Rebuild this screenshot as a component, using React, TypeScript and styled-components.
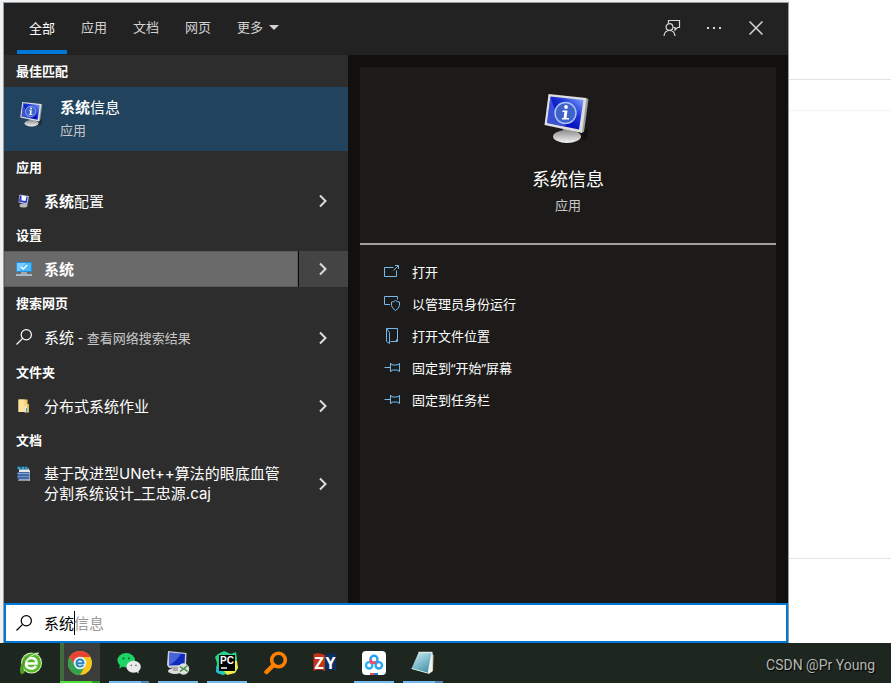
import React, { useId, useState } from "react";
import styled, { createGlobalStyle } from "styled-components";

const Global = createGlobalStyle`
  *, *::before, *::after { box-sizing: border-box; }
  html, body { margin: 0; padding: 0; }
  body {
    background: #fff;
    font-family: "Open Sans", "Noto Sans", "Noto Sans CJK SC", sans-serif;
    font-size: 13px;
    line-height: 20px;
  }
  button, input { font: inherit; color: inherit; }
  button { border: 0; padding: 0; background: none; text-align: left; }
  svg { display: block; flex: none; }
`;

/* ---------- layout ---------- */

const Screen = styled.div`
  display: flex;
  flex-direction: column;
  min-height: 100vh;
`;

const Desktop = styled.div`
  flex: 1;
  display: flex;
  padding: 2px 0 0 3px;
  background: #eef2f5;
`;

const Panel = styled.main`
  flex: 0 1 786px;
  min-width: 0;
  display: flex;
  flex-direction: column;
  border: 1px solid #9c9c9c;
  border-bottom: 0;
`;

const PageBehind = styled.div`
  flex: 1;
  display: flex;
  flex-direction: column;
  margin-top: -2px;
  background: #fff;
`;

const PageBand = styled.div<{ $size: number; $line: string }>`
  height: ${(p) => p.$size}px;
  border-bottom: 1px solid ${(p) => p.$line};
`;

const TopBar = styled.header`
  display: flex;
  justify-content: space-between;
  height: 52px;
  padding: 0 11px 0 12px;
  background: #222;
`;

const Tabs = styled.nav`
  display: flex;
`;

const Tab = styled.button<{ $active?: boolean }>`
  display: flex;
  align-items: center;
  gap: 6px;
  height: 51px;
  margin: 0 1px;
  padding: ${(p) => (p.$active ? 3 : 1)}px 12px 0;
  border-bottom: 4px solid ${(p) => (p.$active ? "#0078d7" : "transparent")};
  color: ${(p) => (p.$active ? "#fff" : "#d2d2d2")};
  white-space: nowrap;
`;

const Tools = styled.div`
  display: flex;
`;

const Tool = styled.button`
  display: grid;
  place-items: center;
  width: 42px;
  height: 50px;
  color: #d6d6d6;
`;

const Body = styled.div`
  flex: 1;
  display: grid;
  grid-template-columns: minmax(0, 344fr) minmax(0, 440fr);
`;

const Results = styled.section`
  background: #2d2d2d;
  color: #fff;
`;

const GroupTitle = styled.h2`
  margin: 0;
  padding: 6px 12px;
  font-size: 13px;
  line-height: 20px;
  font-weight: 700;
`;

const BestMatch = styled.button`
  display: flex;
  align-items: flex-start;
  gap: 15px;
  width: 100%;
  height: 64px;
  padding: 9px 15px 0;
  background: #21435e;
`;

const BestIcon = styled.span`
  padding-top: 5px;
`;

const BestText = styled.span`
  display: flex;
  flex-direction: column;
  gap: 2px;
`;

const ItemTitle = styled.span`
  font-size: 15px;
  line-height: 20px;
`;

const FileTitle = styled(ItemTitle)`
  font-family: Inter, "Noto Sans CJK SC", sans-serif;
`;

const BestTitle = styled(ItemTitle)`
  line-height: 22px;
`;

const Muted = styled.span`
  font-size: 13px;
  color: #c8c8c8;
`;

const Match = styled.b`
  font-weight: 600;
`;

const Row = styled.div<{ $selected?: boolean }>`
  display: flex;
  background: ${(p) => (p.$selected ? "#444" : "none")};
`;

const RowMain = styled.button<{ $selected?: boolean }>`
  flex: 1;
  min-width: 0;
  display: flex;
  align-items: flex-start;
  gap: 12px;
  padding: 8px 12px;
  ${(p) =>
    p.$selected &&
    `
    padding: 7px 11px;
    background: #6a6a6a;
    border: 1px solid #595959;
  `}
`;

const RowIcon = styled.span`
  display: grid;
  place-items: center;
  flex: none;
  width: 16px;
  height: 20px;
`;

const RowMore = styled.button<{ $selected?: boolean }>`
  display: grid;
  place-items: center;
  width: 50px;
  padding-right: 2px;
  color: #dcdcdc;
  border-left: 1px solid ${(p) => (p.$selected ? "#0a0a0a" : "transparent")};
`;

const Detail = styled.section`
  display: flex;
  padding: 12px 12px 0;
  background: #11100e;
`;

const Card = styled.div`
  flex: 1;
  min-width: 0;
  background: #1c1b19;
  color: #fff;
`;

const Hero = styled.div`
  display: flex;
  flex-direction: column;
  align-items: center;
  padding: 25px 0 28px;
  border-bottom: 2px solid #a2a2a1;
`;

const HeroTitle = styled.h1`
  margin: 21px 0 2px;
  font-size: 18px;
  line-height: 28px;
  font-weight: 400;
`;

const Actions = styled.ul`
  list-style: none;
  margin: 0;
  padding: 11px 0;
`;

const Action = styled.button`
  display: flex;
  align-items: center;
  gap: 12px;
  width: 100%;
  height: 32px;
  padding: 0 24px;
  color: #fff;

  svg { color: #76b9ed; }
`;

const SearchBar = styled.label`
  display: flex;
  align-items: center;
  gap: 12px;
  height: 40px;
  padding: 0 10px;
  background: #fff;
  border: 2px solid #0078d7;
  color: #000;
  font-size: 15px;
  line-height: 24px;
`;

const Field = styled.span`
  flex: 1;
  display: grid;
  align-items: center;

  > * { grid-area: 1 / 1; }
`;

const SearchInput = styled.input`
  width: 100%;
  height: 24px;
  padding: 0;
  border: 0;
  outline: 0;
  background: none;
`;

const Hint = styled.span`
  display: flex;
  color: #999;
  pointer-events: none;
`;

const Typed = styled.span`
  visibility: hidden;
`;

const Caret = styled.span`
  width: 1px;
  height: 24px;
  margin-right: -1px;
  background: #000;
`;

const Taskbar = styled.footer`
  display: flex;
  align-items: center;
  justify-content: space-between;
  height: 40px;
  padding: 0 16px 0 11px;
  background: #1e2620;
`;

const Apps = styled.div`
  display: flex;
  gap: 9px;
`;

const AppButton = styled.button<{ $state?: "open" | "many" | "active" }>`
  display: grid;
  place-items: center;
  width: 40px;
  height: 40px;
  padding-top: 2px;
  background: ${(p) =>
    p.$state === "active"
      ? "linear-gradient(90deg, #3f6e3a 4px, #3a3d3a 4px)"
      : "none"};
  border-bottom: 2px solid transparent;
  border-image: ${(p) =>
    p.$state === "active"
      ? "linear-gradient(90deg, #4fe03a 31px, #2f9c2c 31px) 2"
      : p.$state === "many"
      ? "linear-gradient(90deg, #76b9ed 31px, #5288b4 31px) 2"
      : p.$state === "open"
      ? "linear-gradient(#76b9ed, #76b9ed) 2"
      : "none"};
`;

const Watermark = styled.span`
  font-family: Roboto, "Liberation Sans", sans-serif;
  font-size: 14px;
  color: #b4b7b4;
  text-shadow: 1px 1px 1px #000;
  padding-top: 4px;
`;

/* ---------- icons ---------- */

const Monitor = ({ size }: { size: number }) => {
  const id = useId();
  return (
    <svg width={size} height={size} viewBox="0 0 50 52" aria-hidden="true">
      <defs>
        <linearGradient id={id + "s"} x1="0" y1="1" x2="1" y2="0">
          <stop offset="0" stopColor="#1420b4" />
          <stop offset=".4" stopColor="#0510c0" />
          <stop offset=".65" stopColor="#2038d8" />
          <stop offset="1" stopColor="#8eb4ff" />
        </linearGradient>
        <linearGradient id={id + "b"} x1="0" y1="0" x2="0" y2="1">
          <stop offset="0" stopColor="#8d8d8d" />
          <stop offset="1" stopColor="#f4f4f4" />
        </linearGradient>
      </defs>
      <path d="M28 40 45 37 44 47 34 49Z" fill="#000" opacity=".35" />
      <path d="M20 35 31 37 30 43H20Z" fill="#8c8c8c" />
      <ellipse cx="24" cy="44.500" rx="14" ry="6.500" fill={`url(#${id}b)`} />
      <path d="M42 6 45.500 7 41 40 38 41Z" fill="#9a9a9a" />
      <path d="M5.500 2 43.500 6 39 41 1.500 33Z" fill="#dedede" />
      <path d="M7.500 4.500 40.500 8 36 37.500 4 31Z" fill={`url(#${id}s)`} />
      <path d="M7.500 4.500Q11 20 23 34.500L4 31Z" fill="#7b97f4" opacity=".45" />
      <circle cx="22.500" cy="21" r="10.500" fill="#3f63c8" stroke="#a9c2f4" strokeWidth="1.500" />
      <circle cx="23" cy="15" r="1.900" fill="#fff" />
      <path d="M19.500 18.500H24.500L23.500 26H26V27.500H19V26H20.700L21.300 20H19.500Z" fill="#fff" />
    </svg>
  );
};

const ConfigIcon = () => (
  <svg width="16" height="16" viewBox="0 0 16 16" aria-hidden="true">
    <ellipse cx="7.500" cy="12.500" rx="4" ry="2" fill="#b9b9b9" />
    <path d="M3.500 1.500 13 3 11.500 11.500 2.500 9.500Z" fill="#b9bed8" />
    <path d="M4 2.500 11.500 4 10.500 10 3.500 8.500Z" fill="#1c2fd0" />
    <path d="M5.500 2.500 10.500 3.500 9.500 8 5.500 7.500Z" fill="#fff" />
    <path d="M2 5.500 5 6 5.500 9 3 9Z" fill="#4656c0" />
  </svg>
);

const SettingsPc = () => (
  <svg width="16" height="16" viewBox="0 0 16 16" aria-hidden="true">
    <rect y="1" width="16" height="10" fill="#2b8fd8" />
    <rect x="1" y="2" width="14" height="8" fill="#4ab8f8" />
    <path d="M1 2H10L3 10H1Z" fill="#7acbfa" />
    <path d="M5.200 6 7.300 8 11.200 4" fill="none" stroke="#fff" strokeWidth="1.500" />
    <path d="M5 12H11" stroke="#dfe8ee" />
    <rect y="13" width="16" height="2" fill="#a9bac6" />
  </svg>
);

const Magnifier = () => (
  <svg width="16" height="16" viewBox="0 0 16 16" fill="none" stroke="currentColor" strokeWidth="1.200" aria-hidden="true">
    <circle cx="10.300" cy="5.700" r="5.100" />
    <path d="M6.600 9.400.500 15.500" />
  </svg>
);

const FolderIcon = () => (
  <svg width="16" height="16" viewBox="0 0 16 16" aria-hidden="true">
    <path d="M2.500 1.500H11.500V14H2.500Z" fill="#f2cf6c" />
    <path d="M2.500 1.500H8.500V14H2.500Z" fill="#ffe39a" />
    <path d="M11 6H13V14.500H11Z" fill="#e2bd58" />
    <path d="M8.500 9 11 6.500V14.500H8.500Z" fill="#dfe8ee" />
    <path d="M10 10H11V14H10Z" fill="#4d9bc8" />
  </svg>
);

const CajIcon = () => (
  <svg width="16" height="18" viewBox="0 0 16 18" aria-hidden="true">
    <path d="M3 3H12L14 6V16H3Z" fill="#e4e8ea" />
    <path d="M1 1.500H12V4.500H1Z" fill="#176b94" />
    <path d="M2 3H4M6 3H8M9.500 3H11" stroke="#7fdcf5" />
    <path d="M1.500 7H13.500V14.500H1.500Z" fill="#4369a4" />
    <path d="M1.500 8.500H13.500" stroke="#8aa6d0" />
    <path d="M1.500 11.500H13.500" stroke="#6e90c4" />
    <path d="M2 15.500H13.500" stroke="#8e959c" />
  </svg>
);

const Chevron = () => (
  <svg width="14" height="14" viewBox="0 0 14 14" fill="none" stroke="currentColor" strokeWidth="2" aria-hidden="true">
    <path d="M4 1.500 9.500 7 4 12.500" />
  </svg>
);

const line = {
  width: 16,
  height: 16,
  viewBox: "0 0 16 16",
  fill: "none",
  stroke: "currentColor",
  "aria-hidden": true,
} as const;

const OpenIcon = () => (
  <svg {...line}>
    <path d="M9.500 3.500H.500V12.500H12.500V6.500M9.500 6.500 14 2M11 1.500H14.500V5" />
  </svg>
);

const AdminIcon = () => (
  <svg {...line}>
    <path d="M6 8.500H.500V.500H13.500V3.500M11.500 4.500Q13 6 15.500 6V9.500Q15 12.500 11.500 14.500 8 12.500 7.500 9.500V6Q10 6 11.500 4.500Z" />
  </svg>
);

const LocationIcon = () => (
  <svg {...line}>
    <path d="M2.500.500H13.500V10.500L12.500 12V13.500H6.500M2.500.500V13.500L5.500 15.500V4.500L2.500.500M13.500 10.500V13.500H12" />
  </svg>
);

const PinIcon = () => (
  <svg {...line}>
    <path d="M.500 7.500H6.500M6.500 3Q7 5 9 5H13L15.500 3.500V11.500L13 10H9Q7 10 6.500 12Z" />
  </svg>
);

const FeedbackIcon = () => (
  <svg width="18" height="18" viewBox="0 0 18 18" fill="none" stroke="currentColor" strokeWidth="1.200" aria-hidden="true">
    <path d="M5.500 4V1.500H16.500V8.500H14.500L12 11V8.500H10.500" />
    <circle cx="6.500" cy="8" r="3.400" />
    <path d="M1 17Q1.500 11.500 6.500 11.500T12 17" />
  </svg>
);

const MoreIcon = () => (
  <svg width="16" height="4" viewBox="0 0 16 4" fill="currentColor" aria-hidden="true">
    <path d="M1 1H3V3H1ZM7 1H9V3H7ZM13 1H15V3H13Z" />
  </svg>
);

const CloseIcon = () => (
  <svg width="14" height="14" viewBox="0 0 14 14" stroke="currentColor" strokeWidth="1.500" aria-hidden="true">
    <path d="M.500.500 13.500 13.500M13.500.500.500 13.500" />
  </svg>
);

const DropIcon = () => (
  <svg width="10" height="5" viewBox="0 0 10 5" fill="currentColor" aria-hidden="true">
    <path d="M0 0H10L5 5Z" />
  </svg>
);

const BrowserIcon = () => (
  <svg width="24" height="24" viewBox="0 0 24 24" aria-hidden="true">
    <circle cx="12.500" cy="12" r="10.500" fill="#d8f5bd" />
    <circle cx="12.500" cy="12" r="9.500" fill="#58b82c" />
    <path d="M7 12.500H17.500Q17.500 7 12.300 7T6.800 12.300Q7 17.500 12.300 17.500 15.500 17.500 17 15" fill="none" stroke="#fff" strokeWidth="2.600" />
    <path d="M2 23Q-1 18 4 10T21 .500Q10 4 6 12 3 18 6 21 3 24 2 23Z" fill="#4f9f28" />
    <path d="M20 2Q10 4 6 11" fill="none" stroke="#e6ffd2" />
  </svg>
);

const ChromeIcon = () => (
  <svg width="24" height="24" viewBox="0 0 24 24" aria-hidden="true">
    <circle cx="12" cy="12" r="12" fill="#f9c51d" />
    <path d="M1.600 6A12 12 0 0 1 22.400 6H12L6.800 15Z" fill="#e84335" />
    <path d="M1.600 6A12 12 0 0 0 12 24L17.200 15H6.800Z" fill="#34a350" />
    <circle cx="12" cy="12" r="6.300" fill="#e9f3f6" />
    <path d="M8.500 12.300H15.500Q15.400 8.500 12 8.500T8.500 12.200Q8.600 15.600 12 15.600 14.200 15.600 15.200 14" fill="none" stroke="#2588be" strokeWidth="1.900" />
  </svg>
);

const WeChatIcon = () => (
  <svg width="24" height="24" viewBox="0 0 26 24" aria-hidden="true">
    <path d="M3 14 2.500 18 7 15.500Z" fill="#19cf62" />
    <ellipse cx="10" cy="9" rx="9.500" ry="7.800" fill="#1fd467" />
    <ellipse cx="18" cy="16" rx="7.800" ry="6.500" fill="#e8ebe9" />
    <path d="M20 21 23.500 23.500 23 18Z" fill="#e8ebe9" />
    <g fill="#087a38">
      <circle cx="7" cy="7" r="1.200" />
      <circle cx="13" cy="7" r="1.200" />
    </g>
    <g fill="#777">
      <circle cx="15.500" cy="14.500" r="1" />
      <circle cx="20.500" cy="14.500" r="1" />
    </g>
  </svg>
);

const RemoteIcon = () => (
  <svg width="24" height="24" viewBox="0 0 24 24" aria-hidden="true">
    <path d="M2 0 20.500 2 20 16 3 17 1 14Z" fill="#c9ced9" />
    <path d="M3.500 1.500 19 3 18.500 14 3 14.500Z" fill="#1029bd" />
    <path d="M3.500 1.500 15 2.600Q11 10 3 14.500Z" fill="#6781e8" opacity=".65" />
    <ellipse cx="9" cy="20" rx="7" ry="3" fill="#dcdcdc" />
    <path d="M7 16H12V20H7Z" fill="#aaa" />
    <circle cx="17.500" cy="18" r="5.700" fill="#dce3dc" />
    <path d="M14 15.500 17.500 18 14 20.500M21.500 14.500 18 17.500 21.500 20.500" fill="none" stroke="#49874c" strokeWidth="1.500" />
  </svg>
);

const PyCharmIcon = () => (
  <svg width="24" height="24" viewBox="0 0 24 24" aria-hidden="true">
    <path d="M3 3 9 0 16 3 21 1 22 8 20 14 14 22 8 24 1 21 2 12 0 6Z" fill="#25d789" />
    <path d="M18 8 22 10 23 17 20 22 12 24 9 20Z" fill="#f0ee4d" />
    <path d="M1 15 7 18 8 24 2 22Z" fill="#1dc1dd" />
    <rect x="4" y="4" width="16" height="16" fill="#000" />
    <text x="5" y="12.500" fill="#fff" fontFamily="Liberation Sans, sans-serif" fontSize="10" fontWeight="700">PC</text>
    <path d="M6 17H12" stroke="#fff" strokeWidth="1.500" />
  </svg>
);

const FinderIcon = () => (
  <svg width="24" height="24" viewBox="0 0 24 24" fill="none" stroke="#ff8000" aria-hidden="true">
    <circle cx="14.500" cy="9" r="6.800" strokeWidth="3.600" />
    <path d="M9.500 14 2.500 21" strokeWidth="4.500" strokeLinecap="round" />
  </svg>
);

const ZyIcon = () => (
  <svg width="24" height="24" viewBox="0 0 24 24" aria-hidden="true">
    <path d="M.500 3Q6 1 12 4V20Q6 17 .500 20Z" fill="#c43415" />
    <path d="M12 4Q18 1 23 3V20Q18 17 12 20Z" fill="#082f66" />
    <g fill="#fff" fontFamily="Open Sans, sans-serif" fontSize="16" fontWeight="700">
      <text x="1.500" y="17.500">Z</text>
      <text x="12.500" y="17.500">Y</text>
    </g>
  </svg>
);

const CloudDiskIcon = () => (
  <svg width="24" height="24" viewBox="0 0 24 24" fill="none" strokeWidth="2.400" aria-hidden="true">
    <rect width="24" height="24" rx="4" fill="#fff" />
    <circle cx="7.200" cy="14.300" r="3.200" stroke="#27b3f5" />
    <circle cx="16.800" cy="14.300" r="3.200" stroke="#27a4f0" />
    <circle cx="12" cy="8.200" r="3.500" stroke="#27a4f0" />
    <path d="M8.500 8.200A3.500 3.500 0 0 0 10 11.200L8.500 12.500M10 11.200Q12 12.500 14 11.200" stroke="#ef4a63" />
    <path d="M8 23H12" stroke="#ef4a63" strokeWidth="2" />
    <path d="M12 23H16" stroke="#2878d8" strokeWidth="2" />
  </svg>
);

const NotesIcon = () => {
  const id = useId();
  return (
    <svg width="24" height="24" viewBox="0 0 24 24" aria-hidden="true">
      <defs>
        <linearGradient id={id} x1=".2" y1="0" x2=".8" y2="1">
          <stop offset="0" stopColor="#c9e6ea" />
          <stop offset=".5" stopColor="#7fbccb" />
          <stop offset="1" stopColor="#3f8fa3" />
        </linearGradient>
      </defs>
      <path d="M20 2 22.500 4 22 20 18 23 16 22Z" fill="#cfc8ae" />
      <path d="M18 2H21.500L21 20.500 17 22.500Z" fill="#eef2f2" />
      <path d="M7.500 1.500 20.500 2 16.500 22 .500 17.500Z" fill={`url(#${id})`} />
      <path d="M7.500 1.500H21.500" stroke="#dfe5e5" strokeWidth="1.500" />
      <path d="M.500 17.500 16.500 22" stroke="#d4edf0" />
    </svg>
  );
};

/* ---------- content ---------- */

type Result = {
  group: string;
  icon: React.ReactNode;
  title: React.ReactNode;
  selected?: boolean;
};

const results: Result[] = [
  { group: "应用", icon: <ConfigIcon />, title: <ItemTitle><Match>系统</Match>配置</ItemTitle> },
  { group: "设置", icon: <SettingsPc />, title: <ItemTitle><Match>系统</Match></ItemTitle>, selected: true },
  { group: "搜索网页", icon: <Magnifier />, title: <ItemTitle>系统 - <Muted>查看网络搜索结果</Muted></ItemTitle> },
  { group: "文件夹", icon: <FolderIcon />, title: <ItemTitle>分布式系统作业</ItemTitle> },
  { group: "文档", icon: <CajIcon />, title: <FileTitle>基于改进型UNet++算法的眼底血管分割系统设计_王忠源.caj</FileTitle> },
];

const actions = [
  { icon: <OpenIcon />, label: "打开" },
  { icon: <AdminIcon />, label: "以管理员身份运行" },
  { icon: <LocationIcon />, label: "打开文件位置" },
  { icon: <PinIcon />, label: "固定到“开始”屏幕" },
  { icon: <PinIcon />, label: "固定到任务栏" },
];

const apps: { name: string; icon: React.ReactNode; state?: "open" | "many" | "active" }[] = [
  { name: "Browser", icon: <BrowserIcon /> },
  { name: "Chrome", icon: <ChromeIcon />, state: "active" },
  { name: "WeChat", icon: <WeChatIcon />, state: "many" },
  { name: "Remote", icon: <RemoteIcon />, state: "open" },
  { name: "PyCharm", icon: <PyCharmIcon />, state: "open" },
  { name: "Finder", icon: <FinderIcon /> },
  { name: "ZY", icon: <ZyIcon /> },
  { name: "Cloud disk", icon: <CloudDiskIcon />, state: "open" },
  { name: "Notepad", icon: <NotesIcon />, state: "many" },
];

export default function App() {
  const [query, setQuery] = useState("系统");
  return (
    <Screen>
      <Global />
      <Desktop>
        <Panel>
          <TopBar>
            <Tabs>
              <Tab $active>全部</Tab>
              <Tab>应用</Tab>
              <Tab>文档</Tab>
              <Tab>网页</Tab>
              <Tab>更多 <DropIcon /></Tab>
            </Tabs>
            <Tools>
              <Tool aria-label="反馈"><FeedbackIcon /></Tool>
              <Tool aria-label="选项"><MoreIcon /></Tool>
              <Tool aria-label="关闭"><CloseIcon /></Tool>
            </Tools>
          </TopBar>
          <Body>
            <Results>
              <GroupTitle>最佳匹配</GroupTitle>
              <BestMatch>
                <BestIcon><Monitor size={26} /></BestIcon>
                <BestText>
                  <BestTitle><Match>系统</Match>信息</BestTitle>
                  <Muted>应用</Muted>
                </BestText>
              </BestMatch>
              {results.map((r) => (
                <React.Fragment key={r.group}>
                  <GroupTitle>{r.group}</GroupTitle>
                  <Row $selected={r.selected}>
                    <RowMain $selected={r.selected}>
                      <RowIcon>{r.icon}</RowIcon>
                      {r.title}
                    </RowMain>
                    <RowMore $selected={r.selected} aria-label="展开"><Chevron /></RowMore>
                  </Row>
                </React.Fragment>
              ))}
            </Results>
            <Detail>
              <Card>
                <Hero>
                  <Monitor size={52} />
                  <HeroTitle>系统信息</HeroTitle>
                  <Muted>应用</Muted>
                </Hero>
                <Actions>
                  {actions.map((a) => (
                    <li key={a.label}>
                      <Action>{a.icon}{a.label}</Action>
                    </li>
                  ))}
                </Actions>
              </Card>
            </Detail>
          </Body>
          <SearchBar>
            <Magnifier />
            <Field>
              <Hint aria-hidden="true">
                <Typed>{query}</Typed>
                <Caret />
                {query === "系统" && "信息"}
              </Hint>
              <SearchInput aria-label="搜索" value={query} onChange={(e) => setQuery(e.target.value)} />
            </Field>
          </SearchBar>
        </Panel>
        <PageBehind>
          <PageBand $size={80} $line="#e4e4e4" />
          <PageBand $size={31} $line="#f3f3f3" />
          <PageBand $size={448} $line="#e4e4e4" />
        </PageBehind>
      </Desktop>
      <Taskbar>
        <Apps>
          {apps.map((a) => (
            <AppButton key={a.name} $state={a.state} aria-label={a.name}>{a.icon}</AppButton>
          ))}
        </Apps>
        <Watermark>CSDN @Pr Young</Watermark>
      </Taskbar>
    </Screen>
  );
}
